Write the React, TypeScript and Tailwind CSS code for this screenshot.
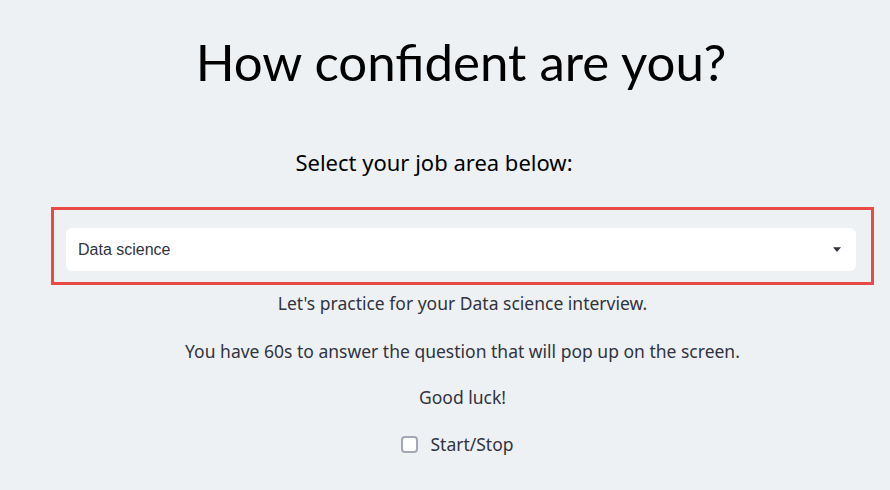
import React from "react";

export default function App() {
  return (
    <div className="w-[890px] h-[490px] overflow-hidden bg-[#edf1f4] text-[#31333f]" style={{ fontFamily: "'Noto Sans', sans-serif" }}>
      <div className="pl-[51px] pr-[16px] flex flex-col items-center">
        <h1 className="mt-[26px] text-[51px] leading-[72px] text-black font-normal pr-[3px]" style={{ fontFamily: "Lato, sans-serif" }}>How confident are you?</h1>
        <p className="mt-[50px] text-[22px] leading-[28px] text-black pr-[57px]">Select your job area below:</p>
        <div className="mt-[31px] w-full border-[3px] border-[#e84a45] pl-[12px] pr-[15px] pt-[18px] pb-[11px]">
          <div className="h-[43px] bg-white rounded-[6px] flex items-center justify-between pl-[12px] pr-[15px]">
            <span className="text-[16px] text-[#31333f]" style={{ fontFamily: "'Liberation Sans', sans-serif" }}>Data science</span>
            <svg width="8" height="5" viewBox="0 0 8 5"><path d="M0 0.3 H8 L4 5 Z" fill="#31333f" /></svg>
          </div>
        </div>
        <p className="mt-[6px] text-[17.5px] leading-[24px]">Let's practice for your Data science interview.</p>
        <p className="mt-[24px] text-[17.5px] leading-[24px]">You have 60s to answer the question that will pop up on the screen.</p>
        <p className="mt-[22px] text-[17.5px] leading-[24px]">Good luck!</p>
        <label className="mt-[23px] flex items-center gap-[12px] ml-[-10px]">
          <span className="w-[17px] h-[17px] rounded-[4px] border-2 border-[#a3a8b4] bg-white" />
          <span className="text-[17.5px] leading-[24px]">Start/Stop</span>
        </label>
      </div>
    </div>
  );
}
